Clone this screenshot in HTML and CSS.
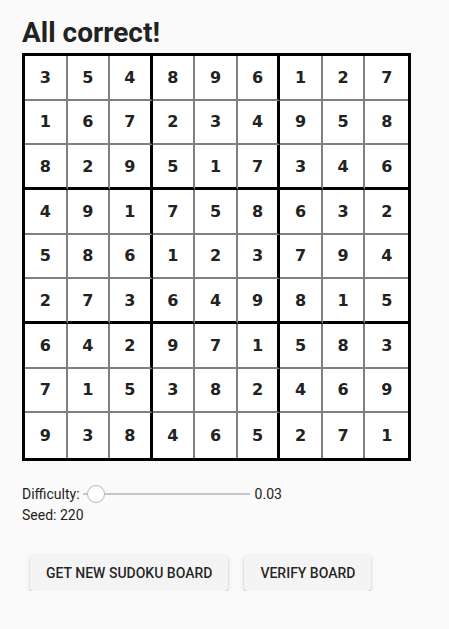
FILE: index.html
```html
<!DOCTYPE html>
<html>
<head>
<meta charset="utf-8">
<link rel="stylesheet" href="styles.css">
</head>
<body>
<div class="app">
  <h1 class="title">All correct!</h1>
  <div class="board">
    <div class="cell">3</div><div class="cell">5</div><div class="cell">4</div><div class="cell">8</div><div class="cell">9</div><div class="cell">6</div><div class="cell">1</div><div class="cell">2</div><div class="cell">7</div>
    <div class="cell">1</div><div class="cell">6</div><div class="cell">7</div><div class="cell">2</div><div class="cell">3</div><div class="cell">4</div><div class="cell">9</div><div class="cell">5</div><div class="cell">8</div>
    <div class="cell">8</div><div class="cell">2</div><div class="cell">9</div><div class="cell">5</div><div class="cell">1</div><div class="cell">7</div><div class="cell">3</div><div class="cell">4</div><div class="cell">6</div>
    <div class="cell">4</div><div class="cell">9</div><div class="cell">1</div><div class="cell">7</div><div class="cell">5</div><div class="cell">8</div><div class="cell">6</div><div class="cell">3</div><div class="cell">2</div>
    <div class="cell">5</div><div class="cell">8</div><div class="cell">6</div><div class="cell">1</div><div class="cell">2</div><div class="cell">3</div><div class="cell">7</div><div class="cell">9</div><div class="cell">4</div>
    <div class="cell">2</div><div class="cell">7</div><div class="cell">3</div><div class="cell">6</div><div class="cell">4</div><div class="cell">9</div><div class="cell">8</div><div class="cell">1</div><div class="cell">5</div>
    <div class="cell">6</div><div class="cell">4</div><div class="cell">2</div><div class="cell">9</div><div class="cell">7</div><div class="cell">1</div><div class="cell">5</div><div class="cell">8</div><div class="cell">3</div>
    <div class="cell">7</div><div class="cell">1</div><div class="cell">5</div><div class="cell">3</div><div class="cell">8</div><div class="cell">2</div><div class="cell">4</div><div class="cell">6</div><div class="cell">9</div>
    <div class="cell">9</div><div class="cell">3</div><div class="cell">8</div><div class="cell">4</div><div class="cell">6</div><div class="cell">5</div><div class="cell">2</div><div class="cell">7</div><div class="cell">1</div>
  </div>
  <div class="controls">
    <div class="difficulty">
      <span class="label">Difficulty:</span>
      <div class="slider">
        <span class="track track-left"></span>
        <span class="thumb"></span>
        <span class="track track-right"></span>
      </div>
      <span class="value">0.03</span>
    </div>
    <div class="seed">Seed: 220</div>
  </div>
  <div class="actions">
    <button class="btn">Get new sudoku board</button>
    <button class="btn">Verify board</button>
  </div>
</div>
</body>
</html>
```
FILE: styles.css
```css
html, body {
  margin: 0;
  padding: 0;
  background: #fafafa;
}
body {
  font-family: Roboto, "Liberation Sans", sans-serif;
  color: rgba(0, 0, 0, 0.87);
}
.app {
  padding: 16px 22px 0;
}
.title {
  margin: 0 0 3px;
  font-family: Roboto, sans-serif;
  font-weight: 700;
  font-size: 28px;
  line-height: 34px;
  color: #222;
}
.board {
  box-sizing: border-box;
  width: 389px;
  height: 408px;
  border: 3px solid #000;
  background: #fff;
  display: grid;
  grid-template-columns: repeat(9, 1fr);
  grid-template-rows: repeat(9, 1fr);
}
.cell {
  box-sizing: border-box;
  display: flex;
  align-items: center;
  justify-content: center;
  border-right: 2px solid #808080;
  border-bottom: 2px solid #808080;
  font-family: "DejaVu Sans", sans-serif;
  font-weight: 700;
  font-size: 16px;
  color: #222;
}
.cell:nth-child(9n+3),
.cell:nth-child(9n+6) {
  border-right: 3px solid #000;
}
.cell:nth-child(9n) {
  border-right: none;
}
.cell:nth-child(n+19):nth-child(-n+27),
.cell:nth-child(n+46):nth-child(-n+54) {
  border-bottom: 3px solid #000;
}
.cell:nth-child(n+73) {
  border-bottom: none;
}
.controls {
  margin-top: 22px;
  font-size: 14px;
  color: #222;
}
.difficulty {
  display: flex;
  align-items: center;
  height: 22px;
  line-height: 20px;
}
.label {
  margin-right: 3px;
}
.slider {
  display: flex;
  align-items: center;
  width: 167px;
}
.track {
  height: 2px;
  background: #c3c6cc;
}
.track-left {
  width: 4px;
}
.track-right {
  flex: 1;
}
.thumb {
  box-sizing: border-box;
  width: 18px;
  height: 18px;
  border-radius: 50%;
  border: 1px solid #b4b7bd;
  background: #fff;
}
.value {
  margin-left: 5px;
}
.seed {
  line-height: 20px;
}
.actions {
  margin-top: 30px;
  display: flex;
  gap: 16px;
  padding-left: 8px;
}
.btn {
  font-family: Roboto, sans-serif;
  font-weight: 500;
  font-size: 14px;
  line-height: 24px;
  letter-spacing: 0;
  text-transform: uppercase;
  color: rgba(0, 0, 0, 0.87);
  background: #f4f4f4;
  border: none;
  border-radius: 4px;
  padding: 6px 16px;
  min-width: 64px;
  height: 36px;
  box-shadow: 0px 3px 1px -2px rgba(0,0,0,0.2), 0px 2px 2px 0px rgba(0,0,0,0.14), 0px 1px 5px 0px rgba(0,0,0,0.12);
}
```
